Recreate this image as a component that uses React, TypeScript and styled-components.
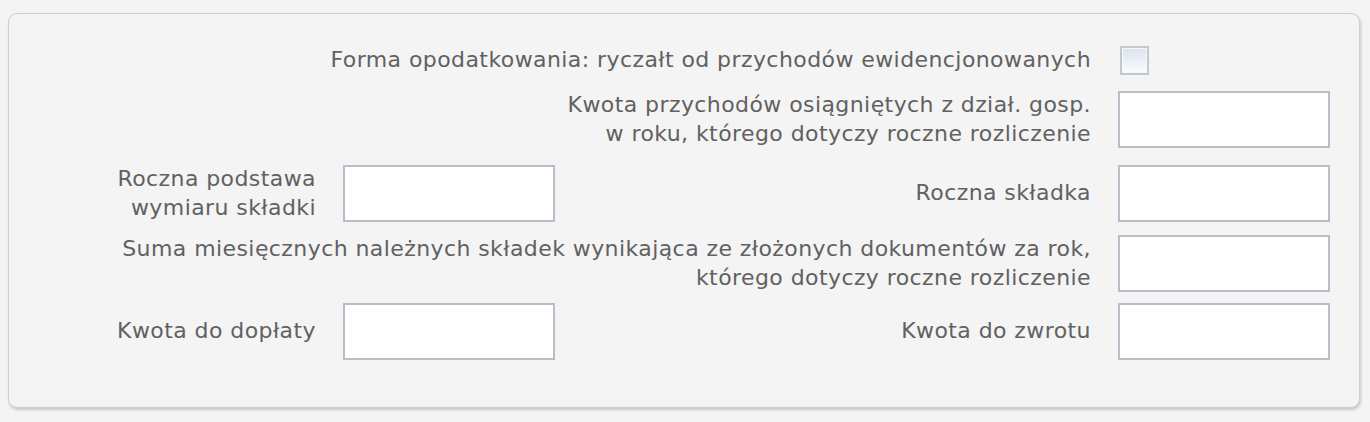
import React from 'react';
import styled, { createGlobalStyle } from 'styled-components';

const GlobalStyle = createGlobalStyle`
  html, body {
    margin: 0;
    padding: 0;
    background: #f4f4f4;
  }
  body {
    font-family: "DejaVu Sans", sans-serif;
  }
`;

const Page = styled.div`
  padding: 13px 10px 14px 8px;
`;

const Panel = styled.div`
  box-sizing: border-box;
  width: 1352px;
  background: #f4f4f4;
  border: 1px solid #cfcfcf;
  border-radius: 9px;
  box-shadow: 1px 2px 3px rgba(0, 0, 0, 0.18);
  padding: 32px 29px 47px 29px;
`;

const Row = styled.div<{ $space: number }>`
  display: grid;
  grid-template-columns: 278px 212px 509px 212px;
  column-gap: 27px;
  align-items: center;
  margin-top: ${(p) => p.$space}px;
`;

const Label = styled.div<{ $wide?: boolean; $col?: number }>`
  grid-column: ${(p) => (p.$wide ? '1 / 4' : `${p.$col ?? 1} / span 1`)};
  text-align: right;
  color: #616161;
  font-size: 22px;
  line-height: 28.5px;
  letter-spacing: 0.42px;
  white-space: nowrap;
`;

const Field = styled.input<{ $col: number }>`
  grid-column: ${(p) => p.$col} / span 1;
  box-sizing: border-box;
  width: 212px;
  height: 57px;
  margin: 0;
  border: 2px solid #b9bdc9;
  background: #ffffff;
  outline: none;
  font: inherit;
`;

const Check = styled.span`
  grid-column: 4 / span 1;
  box-sizing: border-box;
  width: 29px;
  height: 29px;
  margin-left: 2px;
  border: 2px solid #c3c7d2;
  box-shadow: inset 0 0 0 1px #f6f8fb;
  background: linear-gradient(#dbe3ee, #fbfcfe);
`;

export default function App() {
  return (
    <>
      <GlobalStyle />
      <Page>
        <Panel>
          <Row $space={0}>
            <Label $wide>Forma opodatkowania: ryczałt od przychodów ewidencjonowanych</Label>
            <Check />
          </Row>
          <Row $space={16}>
            <Label $wide>
              Kwota przychodów osiągniętych z dział. gosp.
              <br />
              w roku, którego dotyczy roczne rozliczenie
            </Label>
            <Field $col={4} />
          </Row>
          <Row $space={17}>
            <Label $col={1}>
              Roczna podstawa
              <br />
              wymiaru składki
            </Label>
            <Field $col={2} />
            <Label $col={3}>Roczna składka</Label>
            <Field $col={4} />
          </Row>
          <Row $space={13}>
            <Label $wide>
              Suma miesięcznych należnych składek wynikająca ze złożonych dokumentów za rok,
              <br />
              którego dotyczy roczne rozliczenie
            </Label>
            <Field $col={4} />
          </Row>
          <Row $space={11}>
            <Label $col={1}>Kwota do dopłaty</Label>
            <Field $col={2} />
            <Label $col={3}>Kwota do zwrotu</Label>
            <Field $col={4} />
          </Row>
        </Panel>
      </Page>
    </>
  );
}
